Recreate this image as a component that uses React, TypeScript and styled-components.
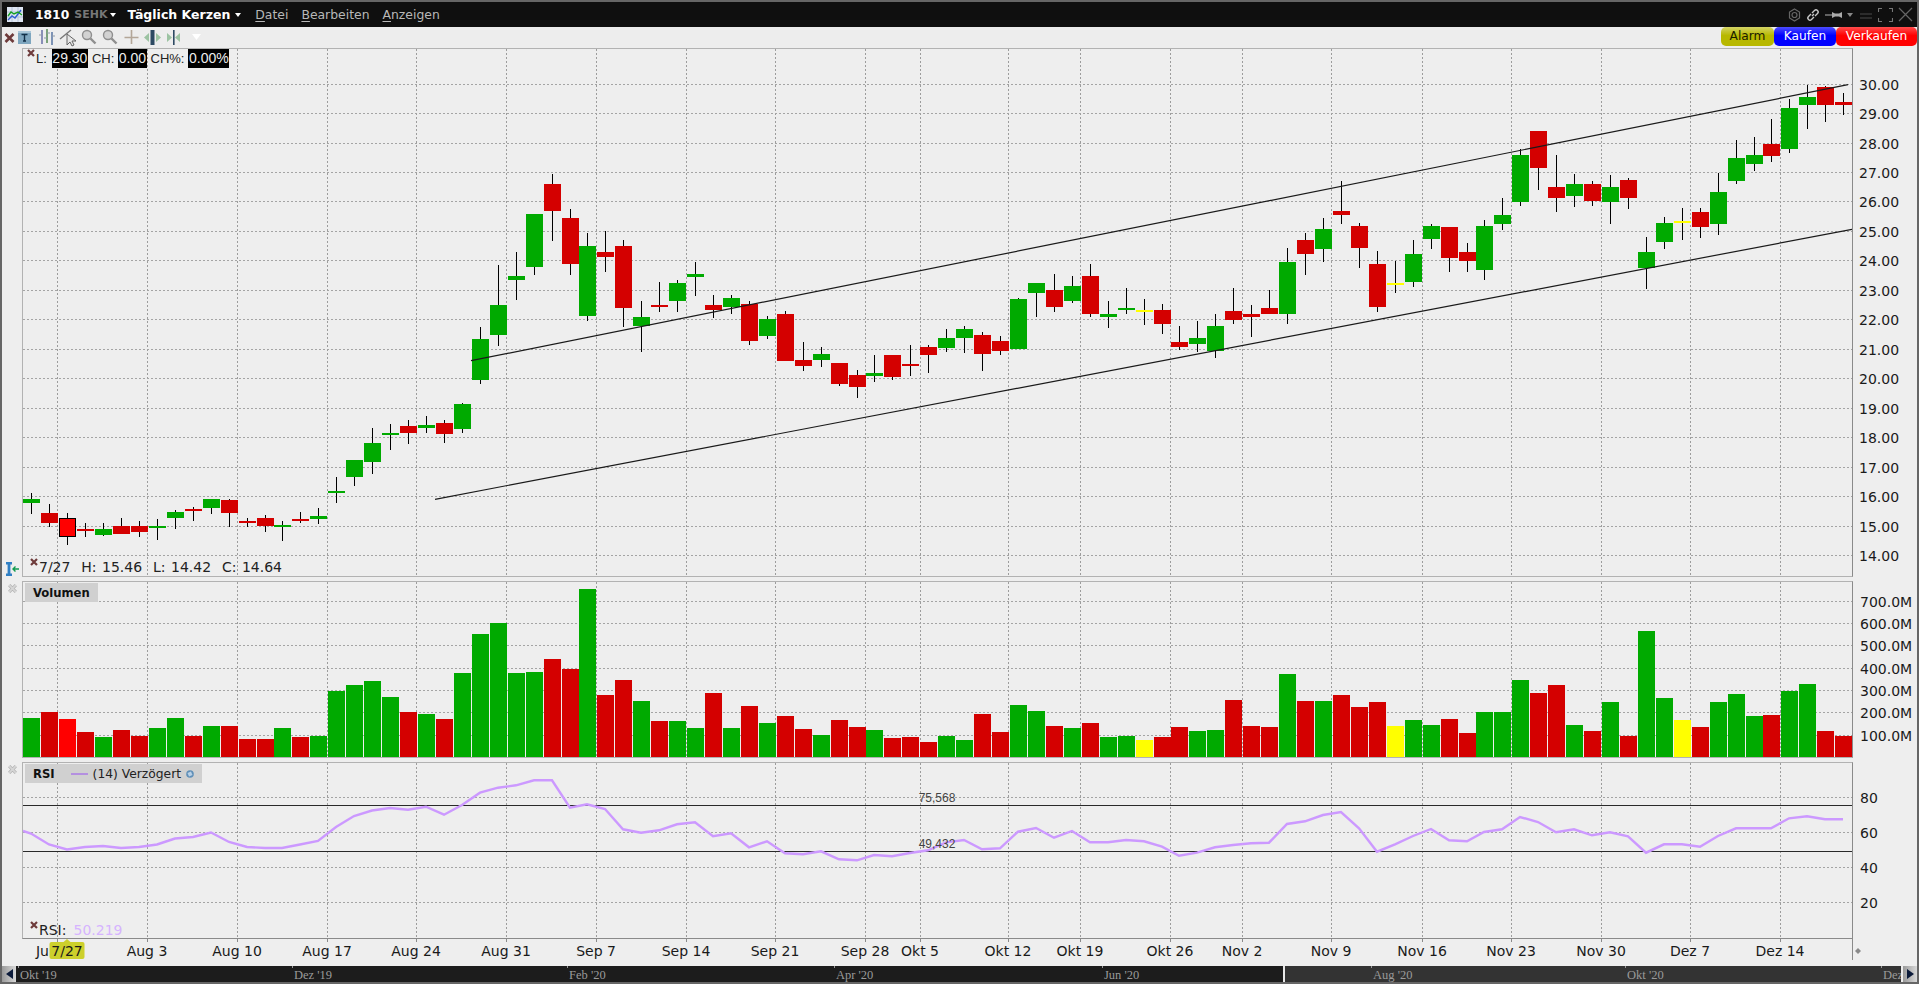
import React from 'react';
import styled, { createGlobalStyle } from 'styled-components';

type Tone = 'g' | 'r' | 'y' | 's';
type Candle = [number, number, number, number, Tone];

// wick top, body top, body bottom, wick bottom, colour (in page pixels)
const candles: Candle[] = [
  [493, 499, 503, 514, 'g'], [504, 513, 523, 527, 'r'], [513, 518, 536, 545, 's'], [523, 529, 531, 537, 'r'],
  [523, 529, 535, 536, 'g'], [518, 526, 534, 534, 'r'], [521, 526, 532, 537, 'r'], [519, 526, 528, 540, 'g'],
  [510, 512, 518, 529, 'g'], [507, 509, 511, 521, 'r'], [499, 499, 508, 514, 'g'], [499, 500, 513, 527, 'r'],
  [518, 521, 523, 527, 'r'], [515, 518, 526, 532, 'r'], [521, 525, 527, 541, 'g'], [512, 519, 521, 523, 'r'],
  [508, 516, 519, 524, 'g'], [477, 491, 493, 503, 'g'], [460, 460, 477, 486, 'g'], [428, 443, 462, 474, 'g'],
  [424, 433, 435, 450, 'g'], [420, 426, 433, 444, 'r'], [416, 425, 428, 433, 'g'], [420, 423, 434, 443, 'r'],
  [403, 404, 429, 433, 'g'], [327, 339, 380, 384, 'g'], [265, 305, 335, 346, 'g'], [252, 276, 280, 300, 'g'],
  [214, 214, 267, 275, 'g'], [174, 184, 211, 241, 'r'], [209, 218, 264, 275, 'r'], [233, 246, 316, 321, 'g'],
  [231, 252, 257, 272, 'r'], [240, 246, 308, 327, 'r'], [301, 317, 326, 352, 'g'], [282, 305, 307, 312, 'r'],
  [280, 283, 301, 312, 'g'], [262, 274, 277, 296, 'g'], [295, 305, 310, 318, 'r'], [295, 298, 307, 314, 'g'],
  [301, 304, 341, 345, 'r'], [316, 319, 336, 339, 'g'], [311, 314, 361, 361, 'r'], [342, 360, 366, 371, 'r'],
  [347, 354, 360, 367, 'g'], [363, 363, 384, 386, 'r'], [370, 375, 387, 398, 'r'], [355, 373, 376, 382, 'g'],
  [355, 355, 377, 380, 'r'], [345, 364, 366, 376, 'r'], [345, 347, 355, 373, 'r'], [329, 338, 348, 352, 'g'],
  [326, 329, 338, 353, 'g'], [332, 335, 354, 371, 'r'], [336, 341, 351, 355, 'r'], [298, 299, 349, 349, 'g'],
  [283, 283, 293, 317, 'g'], [274, 290, 307, 312, 'r'], [276, 286, 301, 303, 'g'], [264, 276, 314, 317, 'r'],
  [301, 314, 317, 328, 'g'], [288, 308, 310, 314, 'g'], [299, 310, 312, 325, 'y'], [304, 310, 324, 334, 'r'],
  [326, 342, 347, 350, 'r'], [321, 338, 344, 352, 'g'], [314, 326, 351, 358, 'g'], [288, 311, 320, 324, 'r'],
  [305, 314, 317, 337, 'r'], [290, 308, 314, 314, 'r'], [248, 262, 314, 324, 'g'], [233, 240, 254, 275, 'r'],
  [218, 229, 249, 262, 'g'], [181, 211, 215, 224, 'r'], [223, 226, 248, 268, 'r'], [251, 264, 307, 312, 'r'],
  [261, 283, 285, 293, 'y'], [240, 254, 282, 287, 'g'], [224, 226, 239, 249, 'g'], [227, 227, 258, 272, 'r'],
  [243, 252, 261, 272, 'r'], [220, 226, 270, 280, 'g'], [198, 215, 224, 230, 'g'], [149, 155, 202, 206, 'g'],
  [131, 131, 168, 190, 'r'], [155, 187, 198, 212, 'r'], [174, 184, 196, 207, 'g'], [181, 184, 201, 206, 'r'],
  [175, 187, 202, 224, 'g'], [178, 180, 198, 209, 'r'], [237, 252, 268, 289, 'g'], [217, 223, 242, 249, 'g'],
  [208, 221, 223, 240, 'y'], [208, 212, 227, 238, 'r'], [173, 192, 224, 235, 'g'], [140, 158, 181, 184, 'g'],
  [137, 155, 164, 171, 'g'], [119, 144, 156, 162, 'r'], [99, 108, 149, 153, 'g'], [85, 97, 105, 129, 'g'],
  [86, 87, 105, 122, 'r'], [93, 102, 105, 115, 'r'],
];

const volumeTops = [
  718, 712, 719, 732, 737, 730, 736, 728, 718, 736, 726, 726, 739, 739, 728, 737, 736, 691, 685, 681, 697,
  712, 714, 719, 673, 634, 623, 673, 672, 659, 669,
  589, 695, 680, 701, 721, 721, 728, 693, 728, 706,
  723, 716, 729, 735, 720, 727, 730, 738, 737, 742,
  736, 740, 714, 732, 705, 711, 726, 728, 723, 737,
  736, 740, 737, 727, 731, 730, 700, 726, 727, 674,
  701, 701, 695, 707, 702, 726, 720, 725, 719, 733,
  712, 712, 680, 693, 685, 725, 731, 702, 736, 631,
  698, 720, 727, 702, 694, 716, 715, 691, 684, 731,
  736,
];

const rsi = [
  833.5, 844.5, 849.5, 847, 846, 848, 847, 844.5, 838.5, 837, 832.5, 842, 847, 848, 848, 844.5, 841, 827, 816, 810.5,
  808, 809.7, 806.7, 814.7, 805, 792.7, 787.7, 785.3, 780.3, 780.3, 807.7, 804.3, 809, 829.3, 832.7, 830.3, 824.3, 822.3,
  836.3, 833.3, 847.3, 841.3, 853.3, 854.3, 851.3, 859.3, 860.3, 855, 856.3, 853, 850.3, 842.3, 840, 849.3, 848.3, 831.7,
  828, 837.7, 831, 842.3, 842.3, 840, 841.3, 846.7, 855.7, 852.7, 847.3, 845, 843.3, 842.7, 824, 821.3, 815, 812, 828.3,
  851.7, 844.3, 836, 829, 840.3, 841.3, 832, 829.3, 817, 822, 832.3, 829.3, 835.3, 832.3, 836.3, 852.7, 844.3, 844.3,
  846.7, 836, 828.3, 828.3, 828.3, 818.3, 816.3, 819.3, 819.3,
];

const toneColors: Record<Tone, string> = { g: '#00aa00', r: '#d40000', y: '#ffff00', s: '#ff0000' };

const candleX = (i: number) => Math.round(31.3 + 17.94 * i);

const timeTicks: [number, string][] = [
  [57, 'Ju'], [147, 'Aug 3'], [237, 'Aug 10'], [327, 'Aug 17'], [416, 'Aug 24'], [506, 'Aug 31'], [596, 'Sep 7'],
  [686, 'Sep 14'], [775, 'Sep 21'], [865, 'Sep 28'], [920, 'Okt 5'], [1008, 'Okt 12'], [1080, 'Okt 19'], [1170, 'Okt 26'],
  [1242, 'Nov 2'], [1331, 'Nov 9'], [1422, 'Nov 16'], [1511, 'Nov 23'], [1601, 'Nov 30'], [1690, 'Dez 7'], [1780, 'Dez 14'],
];

const priceTicks: [number, string][] = [
  [84, '30.00'], [113, '29.00'], [143, '28.00'], [172, '27.00'], [201, '26.00'], [231, '25.00'], [260, '24.00'],
  [290, '23.00'], [319, '22.00'], [349, '21.00'], [378, '20.00'], [408, '19.00'], [437, '18.00'], [467, '17.00'],
  [496, '16.00'], [526, '15.00'], [555, '14.00'],
];

const volumeTicks: [number, string][] = [
  [601, '700.0M'], [623, '600.0M'], [645, '500.0M'], [668, '400.0M'], [690, '300.0M'], [712, '200.0M'], [735, '100.0M'],
];

const rsiTicks: [number, string][] = [[797, '80'], [832, '60'], [867, '40'], [902, '20']];

const rangeLabels: [number, string][] = [
  [16, "Okt '19"], [290, "Dez '19"], [565, "Feb '20"], [832, "Apr '20"], [1100, "Jun '20"], [1369, "Aug '20"], [1623, "Okt '20"], [1879, 'Dez'],
];

const GlobalStyle = createGlobalStyle`
  html, body {
    margin: 0;
    padding: 0;
    background: #eeeeee;
    overflow: hidden;
  }
`;

const Window = styled.div`
  box-sizing: border-box;
  width: 1919px;
  height: 984px;
  border: 2px solid #666666;
  background: #eeeeee;
  display: flex;
  flex-direction: column;
  font-family: 'DejaVu Sans', sans-serif;
  overflow: hidden;
`;

const TitleBar = styled.div`
  flex: none;
  height: 25px;
  background: #0f0f0f;
  display: flex;
  align-items: center;
  padding-left: 5px;
  color: #ffffff;
`;

const Symbol = styled.span`
  margin-left: 12px;
  font-size: 12.3px;
  font-weight: 700;
`;

const Exchange = styled.span`
  margin-left: 5px;
  font-size: 11px;
  font-weight: 700;
  color: #777777;
`;

const Caret = styled.span`
  width: 0;
  height: 0;
  margin-left: ${p => p.$gap}px;
  border-left: 3.5px solid transparent;
  border-right: 3.5px solid transparent;
  border-top: 4px solid #ffffff;
`;

const ViewName = styled.span`
  margin-left: 11px;
  font-size: 12.5px;
  font-weight: 700;
`;

const MenuItem = styled.span`
  margin-left: ${p => p.$gap}px;
  font-size: 12.4px;
  color: #b8b8b8;

  u {
    text-underline-offset: 2px;
  }
`;

const WindowControls = styled.div`
  margin-left: auto;
  display: flex;
  align-items: center;
  padding-right: 4px;
`;

const Toolbar = styled.div`
  flex: none;
  height: 21px;
  background: #ededed;
  display: flex;
  align-items: flex-start;
  justify-content: space-between;
`;

const ToolIcons = styled.div`
  display: flex;
  align-items: center;
  height: 21px;
`;

const TradeButtons = styled.div`
  display: flex;
`;

const tradeTones: Record<string, { bg: string; fg: string; width: number }> = {
  alarm: { bg: 'linear-gradient(#d4d466, #b8b800 45%)', fg: '#1a1a00', width: 53 },
  buy: { bg: 'linear-gradient(#4d4dff, #0000ff 45%)', fg: '#ffffff', width: 62 },
  sell: { bg: 'linear-gradient(#ff4d4d, #ff0000 45%)', fg: '#ffffff', width: 81 },
};

const TradeButton = styled.div`
  box-sizing: border-box;
  width: ${p => tradeTones[p.$tone].width}px;
  height: 19px;
  border-radius: 5px;
  background: ${p => tradeTones[p.$tone].bg};
  color: ${p => tradeTones[p.$tone].fg};
  font-size: 12.2px;
  line-height: 19px;
  text-align: center;
`;

const PanelRow = styled.div`
  flex: none;
  display: flex;
  height: ${p => p.$height}px;
  margin-bottom: ${p => p.$gap || 0}px;
`;

const Gutter = styled.div`
  flex: none;
  width: 20px;
  display: flex;
  flex-direction: column;
  align-items: center;
  justify-content: ${p => (p.$bottom ? 'flex-end' : 'flex-start')};
  padding-top: ${p => (p.$bottom ? 0 : 3)}px;
  padding-bottom: ${p => (p.$bottom ? 1 : 0)}px;
  box-sizing: border-box;
`;

const Plot = styled.div`
  position: relative;
  flex: none;
  box-sizing: border-box;
  width: 1831px;
  border: 1px solid #b2b2b2;
  border-right-color: #8a8a8a;
  border-bottom-color: ${p => (p.$last ? '#8a8a8a' : '#b2b2b2')};
  svg {
    display: block;
  }
`;

const Axis = styled.svg`
  flex: none;
  display: block;
  width: 64px;
`;

const TopLegend = styled.div`
  position: absolute;
  top: 0;
  left: 4px;
  height: 19px;
  display: flex;
  align-items: center;
  font-family: 'Liberation Sans', Arial, sans-serif;
  color: #222222;
`;

const LegendLabel = styled.span`
  font-size: 13px;
  margin: 0 ${p => (p.$first ? 5 : 4)}px 0 ${p => (p.$first ? 0 : 4)}px;
`;

const LegendValue = styled.span`
  background: #000000;
  color: #eeeeee;
  font-size: 14px;
  line-height: 19px;
  padding: 0 0.5px;
`;

const BottomLegend = styled.div`
  position: absolute;
  left: 7px;
  bottom: ${p => p.$bottom}px;
  display: flex;
  align-items: center;
  font-size: 14px;
  line-height: 18px;
  word-spacing: 1px;
  color: #222222;
  white-space: pre;
`;

const CloseMark = styled.svg`
  flex: none;
  width: 8px;
  height: 8px;
  align-self: flex-start;
  margin-right: 1px;
`;

const PanelClose = styled.svg`
  flex: none;
  width: 9px;
  height: 9px;
`;

const RsiValue = styled.span`
  margin-left: 7px;
  color: #d6b4ff;
`;

const IndicatorTag = styled.div`
  position: absolute;
  top: 1px;
  left: 2px;
  height: 19px;
  display: flex;
  align-items: center;
  padding: 0 8px;
  background: #d0d0d0;
  font-size: 11.6px;
  color: #111111;
`;

const TagName = styled.b`
  font-weight: 700;
`;

const TagSwatch = styled.span`
  width: 17px;
  height: 2px;
  margin: 0 5px 0 16px;
  background: #b490e0;
`;

const TagArgs = styled.span`
  font-size: 12.3px;
  color: #222222;
`;

const TimeRow = styled.div`
  flex: none;
  height: 27px;
  display: flex;
  svg {
    display: block;
  }
`;

const RangeBar = styled.div`
  position: relative;
  flex: none;
  height: 16px;
  display: flex;
  background: #333333;
`;

const RangeElapsed = styled.div`
  flex: none;
  width: 1281px;
  background: #1c1c1c;
  border-right: 2px solid #e8e8e8;
`;

const RangeLabel = styled.span`
  position: absolute;
  top: 0;
  height: 16px;
  padding-left: 1px;
  border-left: 1px solid #777777;
  border-image: linear-gradient(#999999 3px, transparent 3px) 1;
  font-family: 'Liberation Serif', serif;
  font-size: 12.5px;
  line-height: 18px;
  color: #9a9a9a;
`;

const RangeArrow = styled.div`
  position: absolute;
  top: 0;
  width: 14px;
  height: 16px;
  left: ${p => p.$left}px;
  background: linear-gradient(90deg, #9a9a9a, #d8d8d8);
  display: flex;
  align-items: center;
  justify-content: center;
`;

const ArrowHead = styled.span`
  width: 0;
  height: 0;
  border-top: 5px solid transparent;
  border-bottom: 5px solid transparent;
  border-left: ${p => (p.$right ? '7px solid #0c1b3a' : 'none')};
  border-right: ${p => (p.$right ? 'none' : '7px solid #0c1b3a')};
`;

const RangeHandle = styled.div`
  position: absolute;
  top: 0;
  left: 1899px;
  width: 2px;
  height: 16px;
  background: #eeeeee;
`;

const XMark = () => (
  <CloseMark viewBox="0 0 8 8">
    <path d="M1 1 L7 7 M7 1 L1 7" stroke="#6e3b3b" strokeWidth="2.2" />
  </CloseMark>
);

const GrayClose = () => (
  <PanelClose viewBox="0 0 9 9">
    <path d="M1.2 1.2 L7.8 7.8 M7.8 1.2 L1.2 7.8" stroke="#b4b4b4" strokeWidth="3.2" />
    <path d="M1.2 1.2 L7.8 7.8 M7.8 1.2 L1.2 7.8" stroke="#d6d6d6" strokeWidth="1.8" />
  </PanelClose>
);

const ToolSlot = styled.svg`
  flex: none;
  display: block;
  width: ${p => p.$w}px;
  height: 21px;
`;

const AppLogo = () => (
  <svg width="16" height="15" viewBox="0 0 16 15">
    <rect width="16" height="15" fill="#dfe6f2" />
    <path d="M0 5 H16 M0 10 H16 M5 0 V15 M11 0 V15" stroke="#b6c3d8" strokeWidth="1" />
    <path d="M1 13 L5 9 L8 11 L14 3" stroke="#2f5fd0" strokeWidth="1.4" fill="none" />
    <path d="M1 9 L4 5 L7 7 L11 5 L15 8" stroke="#15a020" strokeWidth="1.4" fill="none" />
  </svg>
);

const ToolIconRow = () => (
  <ToolIcons>
    <ToolSlot $w={14} viewBox="0 0 14 21">
      <path d="M3.5 7 L11.5 15 M11.5 7 L3.5 15" stroke="#6e3b3b" strokeWidth="2.6" />
    </ToolSlot>
    <ToolSlot $w={20} viewBox="0 0 20 21">
      <rect x="2" y="4" width="13" height="13" fill="#7ea6bf" />
      <rect x="2" y="4" width="13" height="2" fill="#a9c6d8" />
      <path d="M5.5 7.5 H11.5 M8.5 7.5 V14 M7 14 H10" stroke="#123049" strokeWidth="1.4" fill="none" />
    </ToolSlot>
    <ToolSlot $w={21} viewBox="0 0 21 21">
      <path d="M6 3 V17" stroke="#8a8fb8" strokeWidth="2" />
      <path d="M11 2 V16" stroke="#7aa17a" strokeWidth="2" />
      <path d="M16 5 V18" stroke="#7d93b5" strokeWidth="2" />
      <path d="M3 8 H6 M11 6 H14 M8 11 H11 M16 9 H19" stroke="#8e9aa8" strokeWidth="1.2" />
    </ToolSlot>
    <ToolSlot $w={22} viewBox="0 0 22 21">
      <path d="M3 12 L14 3" stroke="#777777" strokeWidth="1.4" />
      <path d="M10 7 L10 18 L13 15 L15 19 L17 18 L15 14 L19 14 Z" fill="#e6e6e6" stroke="#666666" strokeWidth="1" />
    </ToolSlot>
    <ToolSlot $w={21} viewBox="0 0 21 21">
      <circle cx="8" cy="8" r="4.5" fill="#d2d2d2" stroke="#8f8f8f" strokeWidth="1.4" />
      <path d="M11.5 11.5 L16.5 16.5" stroke="#8f8f8f" strokeWidth="2.4" />
    </ToolSlot>
    <ToolSlot $w={21} viewBox="0 0 21 21">
      <circle cx="8" cy="8" r="4.5" fill="#d2d2d2" stroke="#8f8f8f" strokeWidth="1.4" />
      <path d="M11.5 11.5 L16.5 16.5" stroke="#8f8f8f" strokeWidth="2.4" />
    </ToolSlot>
    <ToolSlot $w={21} viewBox="0 0 21 21">
      <path d="M10.5 3 V17 M3.5 10.5 H17.5" stroke="#b3a698" strokeWidth="1.6" />
    </ToolSlot>
    <ToolSlot $w={21} viewBox="0 0 21 21">
      <path d="M2 10.5 L7 6 V15 Z M19 10.5 L14 6 V15 Z" fill="#9cc3a2" />
      <rect x="8.5" y="3" width="4" height="15" fill="#2d4a63" />
    </ToolSlot>
    <ToolSlot $w={21} viewBox="0 0 21 21">
      <path d="M9 10.5 L4 6 V15 Z M12 10.5 L17 6 V15 Z" fill="#9cc3a2" />
      <rect x="10" y="3" width="1.6" height="15" fill="#2d4a63" />
    </ToolSlot>
    <ToolSlot $w={22} viewBox="0 0 22 21">
      <path d="M8 7 H17 L12.5 13 Z" fill="#ffffff" />
    </ToolSlot>
  </ToolIcons>
);

const WindowIcons = () => (
  <WindowControls>
    <svg width="13" height="14" viewBox="0 0 13 14">
      <path d="M6.5 1 L11.5 4 V10 L6.5 13 L1.5 10 V4 Z" fill="none" stroke="#666666" strokeWidth="1.2" />
      <circle cx="6.5" cy="7" r="2.5" fill="none" stroke="#666666" strokeWidth="1.2" />
    </svg>
    <svg style={{ marginLeft: 5 }} width="14" height="14" viewBox="0 0 14 14">
      <path d="M6 8 L8 6 M5 6 L2.5 8.5 A2 2 0 0 0 5.5 11.5 L8 9 M9 8 L11.5 5.5 A2 2 0 0 0 8.5 2.5 L6 5" fill="none" stroke="#c8c8c8" strokeWidth="1.4" />
    </svg>
    <svg style={{ marginLeft: 5 }} width="18" height="14" viewBox="0 0 18 14">
      <path d="M0 7 H7" stroke="#9a9a9a" strokeWidth="1.2" />
      <path d="M7 4 L10 5.5 H14 L17 4 V10 L14 8.5 H10 L7 10 Z" fill="#aaaaaa" />
    </svg>
    <svg style={{ marginLeft: 4 }} width="6" height="14" viewBox="0 0 6 14">
      <path d="M0 5 H6 L3 9 Z" fill="#888888" />
    </svg>
    <svg style={{ marginLeft: 7 }} width="12" height="14" viewBox="0 0 12 14">
      <path d="M0 6 H12 M0 10 H12" stroke="#4a4a4a" strokeWidth="1.2" />
    </svg>
    <svg style={{ marginLeft: 6 }} width="15" height="14" viewBox="0 0 15 14">
      <path d="M0.5 4 V0.5 H4 M11 0.5 H14.5 V4 M14.5 10 V13.5 H11 M4 13.5 H0.5 V10" fill="none" stroke="#777777" strokeWidth="1.1" />
    </svg>
    <svg style={{ marginLeft: 5 }} width="15" height="15" viewBox="0 0 15 15">
      <path d="M1 1 L14 14 M14 1 L1 14" stroke="#666666" strokeWidth="1.2" />
    </svg>
  </WindowControls>
);

const VGrid = ({ y1, y2 }: { y1: number; y2: number }) => (
  <g stroke="#9c9c9c" strokeWidth="1" strokeDasharray="2 2" shapeRendering="crispEdges">
    {timeTicks.map(([x]) => (
      <line key={x} x1={x + 0.5} x2={x + 0.5} y1={y1} y2={y2} />
    ))}
  </g>
);

const HGrid = ({ ticks }: { ticks: [number, string][] }) => (
  <g stroke="#a4a4a4" strokeWidth="1" strokeDasharray="2 2" shapeRendering="crispEdges">
    {ticks.map(([y]) => (
      <line key={y} x1={23} x2={1852} y1={y + 0.5} y2={y + 0.5} />
    ))}
  </g>
);

const AxisLabels = ({ ticks, x, top, height }: { ticks: [number, string][]; x: number; top: number; height: number }) => (
  <Axis height={height} viewBox={`1853 ${top} 64 ${height}`}>
    {ticks.map(([y, label]) => (
      <text key={label} x={x} y={y + 5.5} fontFamily="'DejaVu Sans', sans-serif" fontSize="14" fill="#1a1a1a">
        {label}
      </text>
    ))}
  </Axis>
);

const PriceChart = () => (
  <svg width="1829" height="527" viewBox="23 49 1829 527">
    <VGrid y1={49} y2={576} />
    <HGrid ticks={priceTicks} />
    <g shapeRendering="crispEdges">
      {candles.map(([wickTop, bodyTop, bodyBottom, wickBottom, tone], i) => {
        const x = candleX(i);
        const selected = tone === 's';
        const bodyWidth = selected ? 16 : 17;
        return (
          <g key={i}>
            <rect x={x} y={wickTop} width="1" height={wickBottom - wickTop} fill="#000000" />
            <rect
              x={x - 8}
              y={bodyTop}
              width={bodyWidth}
              height={bodyBottom - bodyTop}
              fill={toneColors[tone]}
              stroke={selected ? '#000000' : 'none'}
            />
          </g>
        );
      })}
    </g>
    <line x1="471" y1="360.7" x2="1848" y2="84.7" stroke="#1a1a1a" strokeWidth="1.2" />
    <line x1="435" y1="499.3" x2="1852" y2="229.3" stroke="#1a1a1a" strokeWidth="1.2" />
  </svg>
);

const VolumeChart = () => (
  <svg width="1829" height="175" viewBox="23 582 1829 175">
    <VGrid y1={582} y2={757} />
    <HGrid ticks={volumeTicks} />
    <g shapeRendering="crispEdges">
      {volumeTops.map((top, i) => (
        <rect key={i} x={candleX(i) - 8} y={top} width="17" height={757 - top} fill={toneColors[candles[i][4]]} />
      ))}
    </g>
  </svg>
);

const RsiChart = () => (
  <svg width="1829" height="175" viewBox="23 763 1829 175">
    <VGrid y1={763} y2={938} />
    <HGrid ticks={rsiTicks} />
    <g stroke="#2a2a2a" strokeWidth="1" shapeRendering="crispEdges">
      <line x1="23" x2="1852" y1="805.5" y2="805.5" />
      <line x1="23" x2="1852" y1="851.5" y2="851.5" />
    </g>
    <polyline
      fill="none"
      stroke="#cc99ff"
      strokeWidth="2.4"
      points={`23,831 ${rsi.map((y, i) => `${candleX(i)},${y}`).join(' ')}`}
    />
    <g fontFamily="'Liberation Sans', sans-serif" fontSize="12" fill="#444444" textAnchor="middle">
      <text x="937" y="802">75,568</text>
      <text x="937" y="848">49,432</text>
    </g>
  </svg>
);

const TimeAxis = () => (
  <svg width="1895" height="27" viewBox="22 939 1895 27">
    <g stroke="#8a8a8a" shapeRendering="crispEdges">
      {timeTicks.map(([x]) => (
        <line key={x} x1={x + 0.5} x2={x + 0.5} y1={939} y2={942} />
      ))}
      <line x1="1852.5" x2="1852.5" y1="939" y2="960" />
    </g>
    <g fontFamily="'DejaVu Sans', sans-serif" fontSize="14" fill="#1a1a1a" textAnchor="middle">
      {timeTicks.map(([x, label]) =>
        label === 'Ju' ? (
          <text key={label} x={49} y={956} textAnchor="end">{label}</text>
        ) : (
          <text key={label} x={x} y={956}>{label}</text>
        ),
      )}
    </g>
    <path d="M67 939 L71 942.5 H63 Z" fill="#cdd02c" />
    <rect x="49.5" y="942" width="35" height="17" rx="2" fill="#cdd02c" />
    <text x="67" y="956" fontFamily="'DejaVu Sans', sans-serif" fontSize="14" fill="#1a1a1a" textAnchor="middle">7/27</text>
    <path d="M1855 951 L1858 948 L1861 951 L1858 954 Z" fill="#8a8a8a" />
  </svg>
);

const App: React.FC = () => {
  return (
    <Window>
      <GlobalStyle />
      <TitleBar>
        <AppLogo />
        <Symbol>1810</Symbol>
        <Exchange>SEHK</Exchange>
        <Caret $gap={3} />
        <ViewName>Täglich Kerzen</ViewName>
        <Caret $gap={5} />
        <MenuItem $gap={14}><u>D</u>atei</MenuItem>
        <MenuItem $gap={13}><u>B</u>earbeiten</MenuItem>
        <MenuItem $gap={13}><u>A</u>nzeigen</MenuItem>
        <WindowIcons />
      </TitleBar>
      <Toolbar>
        <ToolIconRow />
        <TradeButtons>
          <TradeButton $tone="alarm">Alarm</TradeButton>
          <TradeButton $tone="buy">Kaufen</TradeButton>
          <TradeButton $tone="sell">Verkaufen</TradeButton>
        </TradeButtons>
      </Toolbar>

      <PanelRow $height={529} $gap={4}>
        <Gutter $bottom>
          <svg width="14" height="14" viewBox="0 0 14 14">
            <path d="M1 1 H7 M1 13 H7 M4 1 V13" stroke="#2f7fc4" strokeWidth="2.8" />
            <path d="M14 7 H8 M10.5 4.5 L8 7 L10.5 9.5" stroke="#0f9a50" strokeWidth="1.4" fill="none" />
          </svg>
        </Gutter>
        <Plot>
          <PriceChart />
          <TopLegend>
            <XMark />
            <LegendLabel $first>L:</LegendLabel>
            <LegendValue>29.30</LegendValue>
            <LegendLabel>CH:</LegendLabel>
            <LegendValue>0.00</LegendValue>
            <LegendLabel>CH%:</LegendLabel>
            <LegendValue>0.00%</LegendValue>
          </TopLegend>
          <BottomLegend $bottom={0}>
            <XMark />
            {'7/27  H: 15.46  L: 14.42  C: 14.64'}
          </BottomLegend>
        </Plot>
        <AxisLabels ticks={priceTicks} x={1859} top={48} height={529} />
      </PanelRow>

      <PanelRow $height={177} $gap={4}>
        <Gutter>
          <GrayClose />
        </Gutter>
        <Plot>
          <VolumeChart />
          <IndicatorTag>
            <TagName>Volumen</TagName>
          </IndicatorTag>
        </Plot>
        <AxisLabels ticks={volumeTicks} x={1860} top={581} height={177} />
      </PanelRow>

      <PanelRow $height={177}>
        <Gutter>
          <GrayClose />
        </Gutter>
        <Plot $last>
          <RsiChart />
          <IndicatorTag>
            <TagName>RSI</TagName>
            <TagSwatch />
            <TagArgs>(14) Verzögert</TagArgs>
            <svg style={{ marginLeft: 5 }} width="8" height="8" viewBox="0 0 8 8">
              <circle cx="4" cy="4" r="3.8" fill="#5f8fb8" />
              <path d="M1.5 3 L5 1.5 L6.5 5 L3 6.5 Z" fill="#b8d0e6" />
            </svg>
          </IndicatorTag>
          <BottomLegend $bottom={-1}>
            <XMark />
            RSI:
            <RsiValue>50.219</RsiValue>
          </BottomLegend>
        </Plot>
        <AxisLabels ticks={rsiTicks} x={1860} top={762} height={177} />
      </PanelRow>

      <TimeRow>
        <Gutter />
        <TimeAxis />
      </TimeRow>

      <RangeBar>
        <RangeElapsed />
        {rangeLabels.map(([left, label]) => (
          <RangeLabel key={label} style={{ left }}>{label}</RangeLabel>
        ))}
        <RangeHandle />
        <RangeArrow $left={0}><ArrowHead /></RangeArrow>
        <RangeArrow $left={1901}><ArrowHead $right /></RangeArrow>
      </RangeBar>
    </Window>
  );
};

export default App;
